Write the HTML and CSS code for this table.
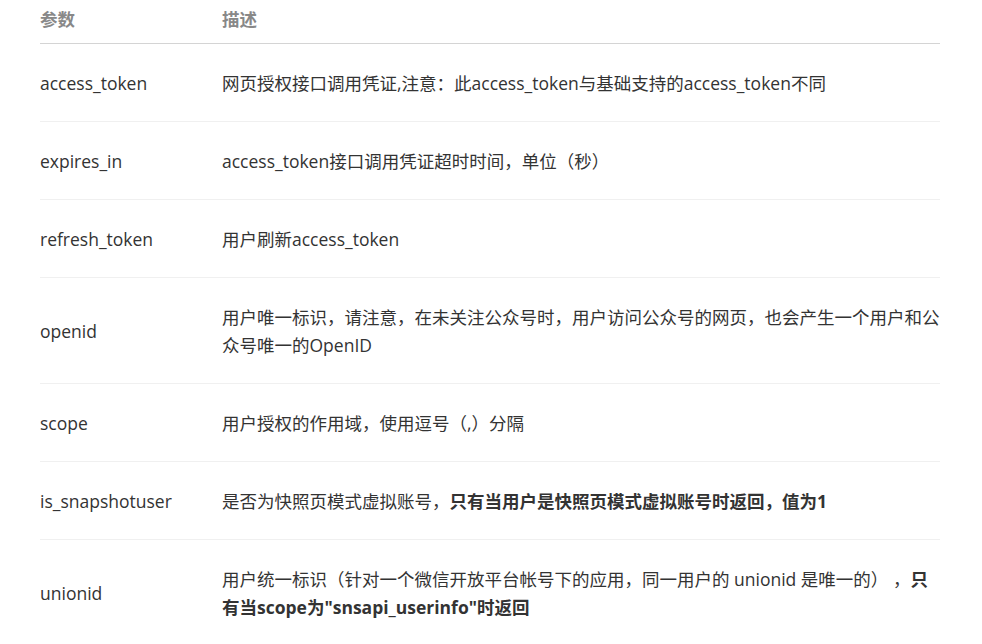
FILE: index.html
```html
<!DOCTYPE html>
<html lang="zh-CN">
<head>
    <meta charset="UTF-8">
    <meta name="viewport" content="width=device-width, initial-scale=1.0">
    <title>返回参数说明</title>
    <link rel="stylesheet" href="styles.css">
</head>
<body>
    <div class="doc">
        <table class="param-table">
            <thead>
                <tr>
                    <th class="col-name">参数</th>
                    <th>描述</th>
                </tr>
            </thead>
            <tbody>
                <tr>
                    <td>access_token</td>
                    <td>网页授权接口调用凭证,注意：此access_token与基础支持的access_token不同</td>
                </tr>
                <tr>
                    <td>expires_in</td>
                    <td>access_token接口调用凭证超时时间，单位（秒）</td>
                </tr>
                <tr>
                    <td>refresh_token</td>
                    <td>用户刷新access_token</td>
                </tr>
                <tr>
                    <td>openid</td>
                    <td>用户唯一标识，请注意，在未关注公众号时，用户访问公众号的网页，也会产生一个用户和公众号唯一的OpenID</td>
                </tr>
                <tr>
                    <td>scope</td>
                    <td>用户授权的作用域，使用逗号（,）分隔</td>
                </tr>
                <tr>
                    <td>is_snapshotuser</td>
                    <td>是否为快照页模式虚拟账号，<strong>只有当用户是快照页模式虚拟账号时返回，值为1</strong></td>
                </tr>
                <tr>
                    <td>unionid</td>
                    <td>用户统一标识（针对一个微信开放平台帐号下的应用，同一用户的 unionid 是唯一的） ，<strong>只有当scope为"snsapi_userinfo"时返回</strong></td>
                </tr>
            </tbody>
        </table>
    </div>
</body>
</html>
```

FILE: styles.css
```css
body {
    margin: 0;
    background-color: #fff;
    font-family: "Open Sans", "Noto Sans CJK SC", sans-serif;
    font-size: 17.5px;
    line-height: 28px;
    color: #333;
}
.doc {
    padding: 0 40px;
}
.param-table {
    width: 900px;
    border-collapse: collapse;
}
.param-table th,
.param-table td {
    padding: 0;
    text-align: left;
    vertical-align: middle;
}
.param-table th {
    padding: 5px 0 10px;
    font-weight: bold;
    color: #888;
    border-bottom: 1px solid #d4d4d4;
}
.param-table .col-name {
    width: 182px;
}
.param-table td {
    padding: 25px 0 24px;
    border-bottom: 1px solid #f0f0f0;
}
.param-table strong {
    font-weight: bold;
    color: #333;
}
```
